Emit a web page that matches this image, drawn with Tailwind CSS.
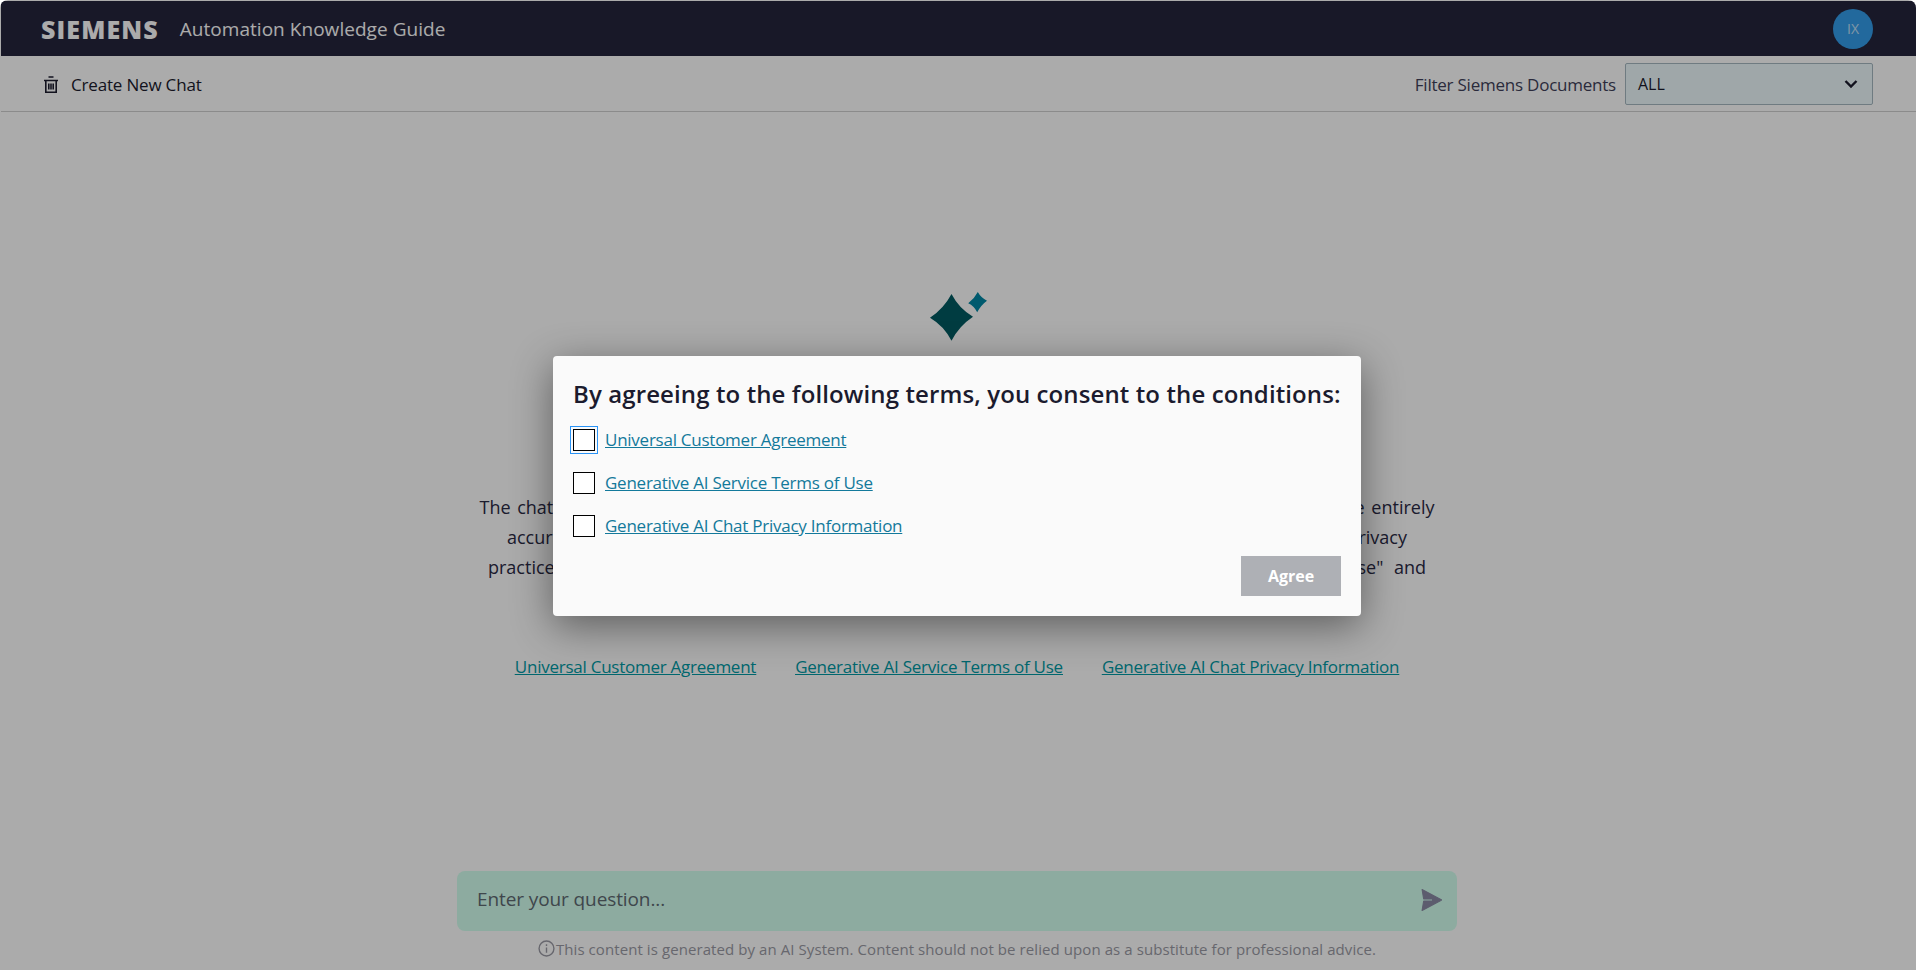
<!DOCTYPE html>
<html>
<head>
<meta charset="utf-8">
<script src="https://cdn.jsdelivr.net/npm/@tailwindcss/browser@4"></script>
</head>
<body class="bg-white font-['Open_Sans',sans-serif]">
<div class="relative h-[970px] w-[1916px] overflow-hidden rounded-t-lg pl-px pt-px">
  <div class="flex h-[969px] flex-col bg-white">
    <header class="flex h-[55px] shrink-0 items-center justify-between bg-[#25253d] pl-10 pr-[43px] text-white">
      <div class="flex items-center gap-[21px] pt-[1px]">
        <span class="text-[25px] font-extrabold leading-none tracking-[1.1px]">SIEMENS</span>
        <span class="pt-[1px] text-[19px] leading-none tracking-[0.04px]">Automation Knowledge Guide</span>
      </div>
      <div class="flex h-10 w-10 items-center justify-center rounded-full bg-[#339dea] text-[14px] text-white/70">IX</div>
    </header>
    <div class="flex h-[56px] shrink-0 items-center justify-between border-b border-[#d0d0d0] pl-[42px] pr-[43px]">
      <div class="flex items-center gap-[12px] pt-[2px] text-[#1b1b2e]">
        <svg class="h-[18px] w-[16px]" viewBox="0 0 16 18" fill="none" stroke="currentColor" stroke-width="1.6"><path d="M1 4.500h14M5.500 1h5M2.800 4.500v11.700h10.400V4.500M5.800 7.500v6M8 7.500v6M10.200 7.500v6"/></svg>
        <span class="text-[17px] tracking-[-0.18px]">Create New Chat</span>
      </div>
      <div class="flex items-center gap-[9px]">
        <span class="pt-[2px] text-[17px] tracking-[-0.23px] text-[#3f3f5a]">Filter Siemens Documents</span>
        <div class="flex h-[42px] w-[248px] items-center justify-between rounded-[2px] border border-[#a6b8c0] bg-[#eefafc] pl-[12px] pr-[14px] text-[#1b1b2e]">
          <span class="text-[16px]">ALL</span>
          <svg class="h-[10px] w-[14px]" viewBox="0 0 14 10" fill="none" stroke="#1b1b2e" stroke-width="2.4"><path d="M1.500 2l5.500 5.500L12.500 2"/></svg>
        </div>
      </div>
    </div>
    <main class="flex flex-1 flex-col items-center pr-[3px]">
      <svg class="mt-[180px] h-[50px] w-[60px] overflow-visible" viewBox="0 0 60 50">
        <path d="M24.500 2Q32 16.500 46 24.700Q32 34 24.500 48.700Q17 34 3 25.700Q16.500 17 24.500 2Z" fill="#005a61"/>
        <path d="M50.800 0Q54 5.800 60 8.700Q53.800 13.200 50.200 20.300Q47.200 14.100 41.200 11.300Q47.300 6.800 50.800 0Z" fill="#0087a4"/>
      </svg>
      <div class="mt-[150px] flex flex-col items-center text-[18px] leading-[30px] text-[#2a2a45]">
        <p class="w-[955px] whitespace-nowrap [text-align-last:justify]">The chatbot uses generative AI technology and can make mistakes, so the answers it gives may not be entirely</p>
        <p class="w-[900px] whitespace-nowrap [text-align-last:justify]">accurate. Please check important information yourself and review our data handling and privacy</p>
        <p class="w-[938px] whitespace-nowrap [text-align-last:justify]">practices before you continue by carefully reading all of the "Generative AI Service Terms of Use" and</p>
      </div>
      <div class="mt-[71px] flex gap-[39px] text-[17px] leading-[28px] tracking-[-0.25px] text-[#009aa5] underline">
        <a>Universal Customer Agreement</a>
        <a>Generative AI Service Terms of Use</a>
        <a>Generative AI Chat Privacy Information</a>
      </div>
      <div class="mt-auto flex h-[60px] w-[1000px] items-center justify-between rounded-lg bg-[#d2ffef] pl-5 pr-[15px]">
        <span class="pb-[2px] text-[19px] tracking-[-0.1px] text-[#5f6a72]">Enter your question...</span>
        <svg class="mb-[2px] h-[22px] w-[21px]" viewBox="0 0 20 21" fill="#8a8aa4"><path d="M1 .5L20 10.500L1 20.500L2.500 11.500H11V9.500H2.500Z" stroke="#8a8aa4" stroke-linejoin="round"/></svg>
      </div>
      <div class="mb-[10px] mt-[7px] flex items-center gap-[1px] text-[15px] tracking-[0.08px] text-[#9a9aa4]">
        <svg class="h-[17px] w-[17px]" viewBox="0 0 16 16" fill="none" stroke="currentColor" stroke-width="1.3"><circle cx="8" cy="8" r="7"/><path d="M8 7v5M8 4v1.600"/></svg>
        <span>This content is generated by an AI System. Content should not be relied upon as a substitute for professional advice.</span>
      </div>
    </main>
  </div>
  <div class="absolute inset-0 flex items-center justify-center bg-black/[0.33] pr-[2px] pt-[2px]">
    <div class="flex h-[260px] w-[808px] flex-col rounded-[4px] bg-[#fafafa] px-[20px] pt-[20px] shadow-[0_10px_40px_rgba(0,0,0,0.45)]">
      <h2 class="pt-[2px] text-[24px] font-semibold leading-[32px] tracking-[0.11px] text-[#1b1b2e]">By agreeing to the following terms, you consent to the conditions:</h2>
      <div class="mt-[18px] flex flex-col gap-[20px] text-[17px] tracking-[-0.25px] text-[#13799b]">
        <label class="flex h-[23px] items-center gap-[10px]"><span class="h-[22px] w-[22px] border border-black bg-white outline outline-[1px] outline-offset-[2px] outline-[#2a93f5]"></span><a class="pt-[1px] underline">Universal Customer Agreement</a></label>
        <label class="flex h-[23px] items-center gap-[10px]"><span class="h-[22px] w-[22px] border border-black bg-white"></span><a class="pt-[1px] underline">Generative AI Service Terms of Use</a></label>
        <label class="flex h-[23px] items-center gap-[10px]"><span class="h-[22px] w-[22px] border border-black bg-white"></span><a class="underline">Generative AI Chat Privacy Information</a></label>
      </div>
      <div class="mt-auto mb-[20px] flex justify-end">
        <button class="h-10 w-[100px] bg-[#aeb0b5] text-[16px] font-bold text-white">Agree</button>
      </div>
    </div>
  </div>
</div>
</body>
</html>
